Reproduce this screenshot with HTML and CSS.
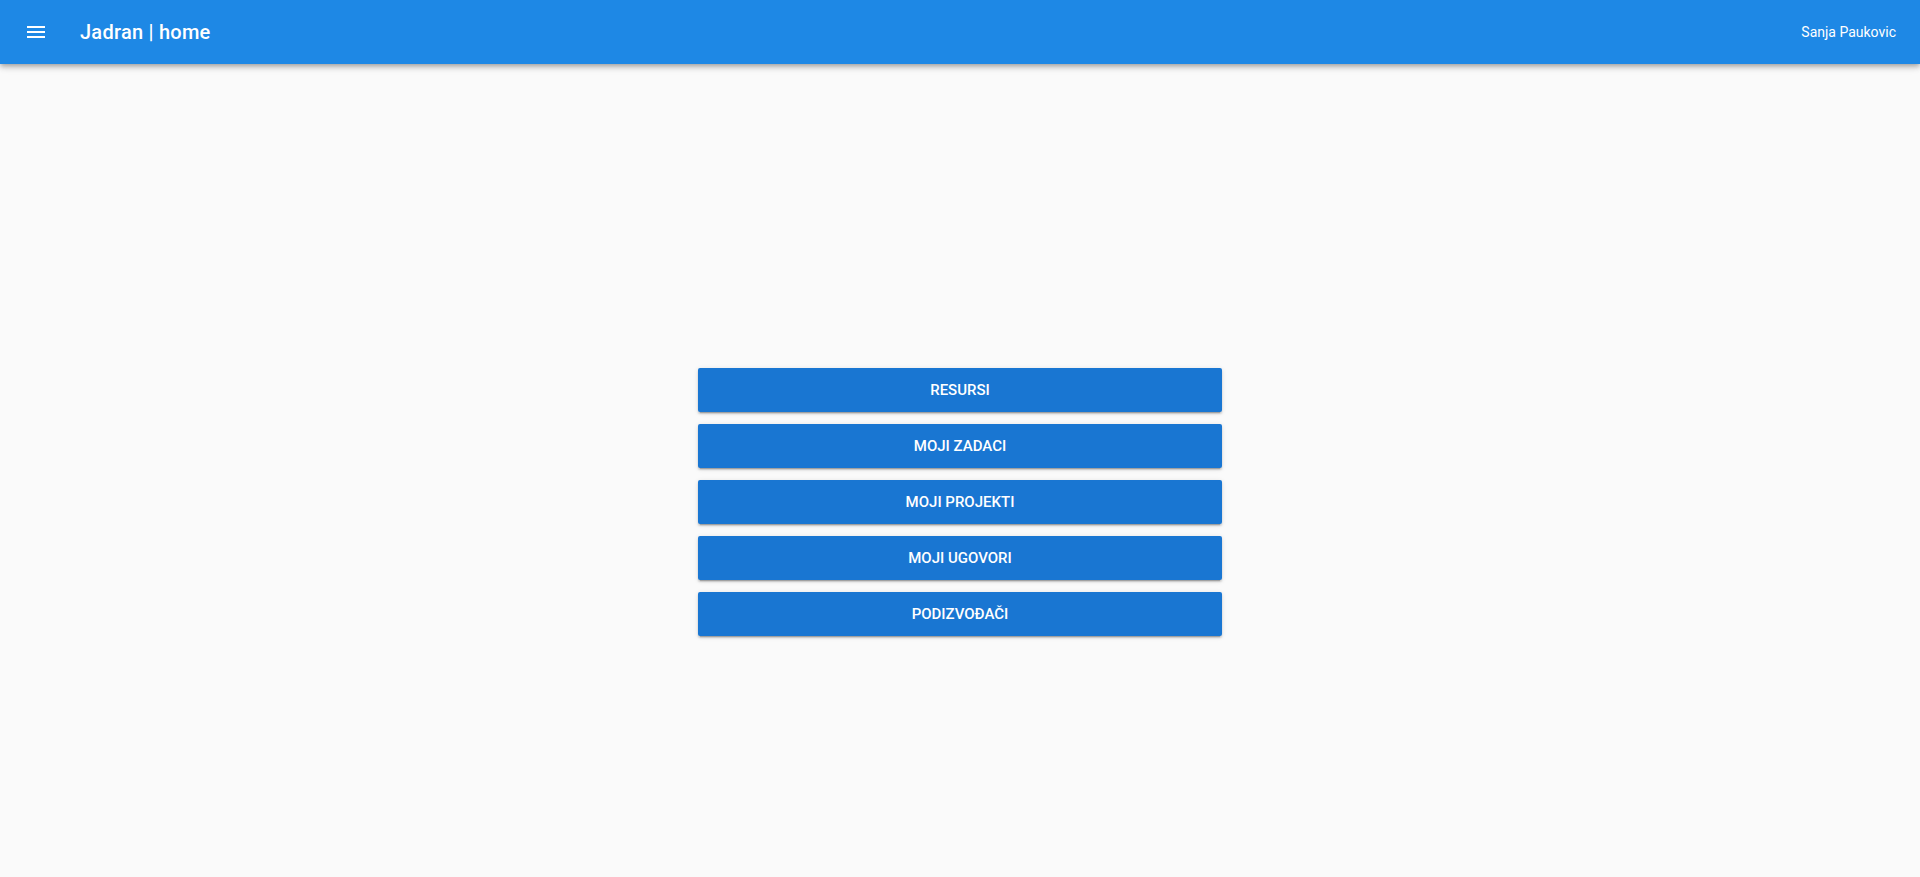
FILE: index.html
```html
<!DOCTYPE html>
<html lang="hr">
<head>
<meta charset="utf-8">
<title>Jadran | home</title>
<link rel="stylesheet" href="styles.css">
</head>
<body>
<header class="toolbar">
  <button class="menu-btn" aria-label="menu">
    <svg viewBox="0 0 24 24" width="24" height="24"><path fill="#fff" d="M3 18h18v-2H3v2zm0-5h18v-2H3v2zm0-7v2h18V6H3z"/></svg>
  </button>
  <h1 class="title">Jadran | home</h1>
  <span class="spacer"></span>
  <span class="user">Sanja Paukovic</span>
</header>
<main class="main">
  <nav class="menu">
    <button class="nav-btn">Resursi</button>
    <button class="nav-btn">Moji zadaci</button>
    <button class="nav-btn">Moji projekti</button>
    <button class="nav-btn">Moji ugovori</button>
    <button class="nav-btn">Podizvođači</button>
  </nav>
</main>
</body>
</html>
```
FILE: styles.css
```css
html, body {
  margin: 0;
  padding: 0;
}
body {
  background: #fafafa;
  font-family: Roboto, "Liberation Sans", sans-serif;
  overflow: hidden;
}
.toolbar {
  height: 64px;
  background: #1e88e5;
  color: #fff;
  display: flex;
  align-items: center;
  padding: 0 24px;
  box-shadow: 0 2px 4px -1px rgba(0,0,0,.2), 0 4px 5px 0 rgba(0,0,0,.14), 0 1px 10px 0 rgba(0,0,0,.12);
  position: relative;
  z-index: 2;
}
.menu-btn {
  background: none;
  border: 0;
  padding: 0;
  width: 24px;
  height: 24px;
  display: flex;
  cursor: pointer;
}
.title {
  margin: 0 0 0 32px;
  font-size: 20px;
  font-weight: 500;
  letter-spacing: 0.25px;
}
.spacer { flex: 1; }
.user {
  font-size: 14px;
  font-weight: 400;
}
.main {
  height: calc(100vh - 64px);
  box-sizing: border-box;
  padding-top: 62px;
  display: flex;
  align-items: center;
  justify-content: center;
}
.menu {
  width: 524px;
  display: flex;
  flex-direction: column;
  gap: 12px;
}
.nav-btn {
  height: 44px;
  border: 0;
  border-radius: 2px;
  background: #1976d2;
  color: #fff;
  font-family: Roboto, "Liberation Sans", sans-serif;
  font-size: 15px;
  font-weight: 500;
  text-transform: uppercase;
  box-shadow: 0 3px 1px -2px rgba(0,0,0,.2), 0 2px 2px 0 rgba(0,0,0,.14), 0 1px 5px 0 rgba(0,0,0,.12);
  cursor: pointer;
}
```
